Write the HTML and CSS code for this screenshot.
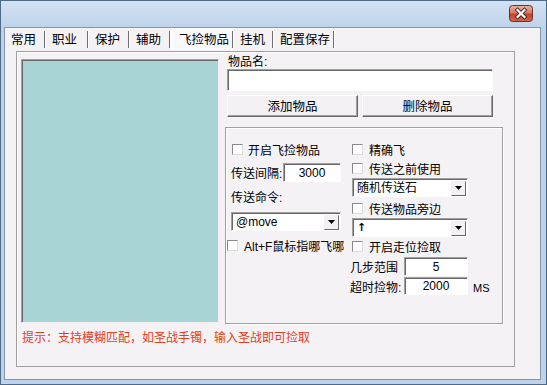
FILE: index.html
```html
<!DOCTYPE html>
<html>
	<head>
		<meta charset="UTF-8">
		<title>飞捡物品</title>
		<link rel="stylesheet" href="styles.css">
	</head>
	<body>
		<div class="window">
			<div class="titlebar">
				<div class="close">
					<svg width="24" height="17" viewBox="0 0 24 17">
						<defs>
							<linearGradient id="red" x1="0" y1="0" x2="0" y2="1">
								<stop offset="0" stop-color="#eab3a5"/>
								<stop offset="0.45" stop-color="#d77a63"/>
								<stop offset="0.55" stop-color="#c2432c"/>
								<stop offset="1" stop-color="#d8664a"/>
							</linearGradient>
						</defs>
						<rect x="0.5" y="0.5" width="23" height="16" rx="3" fill="url(#red)" stroke="#6f2f27"/>
						<path d="M8.5 5 L15.5 12 M15.5 5 L8.5 12" stroke="#4a2a26" stroke-width="4" stroke-linecap="square"/>
						<path d="M8.5 5 L15.5 12 M15.5 5 L8.5 12" stroke="#fff" stroke-width="2.2" stroke-linecap="square"/>
					</svg>
				</div>
			</div>
			<div class="client">
				<div class="tabs">
					<div class="tab t1">常用</div>
					<div class="tab t2">职业</div>
					<div class="tab t3">保护</div>
					<div class="tab t4">辅助</div>
					<div class="tab t5 on">飞捡物品</div>
					<div class="tab t6">挂机</div>
					<div class="tab t7">配置保存</div>
				</div>
				<div class="page">
					<div class="toprow">
						<div class="list"></div>
						<div class="side">
							<div class="label">物品名:</div>
							<div class="edit name"></div>
							<div class="btnrow">
								<div class="btn">添加物品</div>
								<div class="btn">删除物品</div>
							</div>
							<div class="group">
								<div class="col left">
									<div class="check c1"><span class="box"></span>开启飞捡物品</div>
									<div class="field f1">
										<span class="flabel">传送间隔:</span>
										<span class="edit num w58">3000</span>
									</div>
									<div class="label cmd">传送命令:</div>
									<div class="combo cb1">
										<span class="val">@move</span>
										<span class="arrow"><svg width="7" height="4"><polygon points="0,0 7,0 3.5,4" fill="#000"/></svg></span>
									</div>
									<div class="check c2"><span class="box"></span>Alt+F鼠标指哪飞哪</div>
								</div>
								<div class="col right">
									<div class="check r1"><span class="box"></span>精确飞</div>
									<div class="check r2"><span class="box"></span>传送之前使用</div>
									<div class="combo cb2">
										<span class="val">随机传送石</span>
										<span class="arrow"><svg width="7" height="4"><polygon points="0,0 7,0 3.5,4" fill="#000"/></svg></span>
									</div>
									<div class="check r3"><span class="box"></span>传送物品旁边</div>
									<div class="combo cb3">
										<span class="val up">↑</span>
										<span class="arrow"><svg width="7" height="4"><polygon points="0,0 7,0 3.5,4" fill="#000"/></svg></span>
									</div>
									<div class="check r4"><span class="box"></span>开启走位捡取</div>
									<div class="field f2">
										<span class="flabel w54">几步范围</span>
										<span class="edit num w64">5</span>
									</div>
									<div class="field f3">
										<span class="flabel w54">超时捡物:</span>
										<span class="edit num w64">2000</span>
										<span class="ms">MS</span>
									</div>
								</div>
							</div>
						</div>
					</div>
					<div class="hint">提示：支持模糊匹配，如圣战手镯，输入圣战即可捡取</div>
				</div>
			</div>
		</div>
	</body>
</html>
```
FILE: styles.css
```css
body{
	margin: 0;
	font-family: "Liberation Sans", "Noto Sans CJK SC", sans-serif;
	font-size: 12px;
	color: #000;
}
.window{
	width: 547px;
	height: 385px;
	box-sizing: border-box;
	border: 1px solid #4f6a88;
	background: linear-gradient(#d4e2f3 0px, #bed3ea 26px, #bed3ea 100%);
	padding: 0 5px 4px 3px;
	display: flex;
	flex-direction: column;
}
.titlebar{
	height: 26px;
	flex: none;
	display: flex;
	justify-content: flex-end;
	align-items: flex-start;
}
.close{
	margin: 4px 8px 0 0;
	width: 24px;
	height: 17px;
}
.close svg{
	display: block;
}
.client{
	flex: 1;
	border: 1px solid #8497ae;
	background: #f5f2f6;
}

/* tabs */
.tabs{
	display: flex;
	height: 22px;
}
.tab{
	box-sizing: border-box;
	display: flex;
	align-items: center;
	padding-left: 6px;
	padding-bottom: 2px;
	white-space: nowrap;
	font-size: 12.5px;
}
.tab::after{
	content: "";
	margin-left: auto;
	width: 1px;
	height: 17px;
	margin-top: 3px;
	background: #6e6e6e;
	border-right: 1px solid #fff;
}
.t1{ width: 41px; }
.t2{ width: 43px; }
.t3{ width: 41px; }
.t4{ width: 41px; }
.t5{ width: 63px; padding-left: 8px; }
.t6{ width: 40px; }
.t7{ width: 61px; }
.tab.on{
	background: #f9f8fa;
	box-shadow: inset 1px 1px #fff;
}

/* page */
.page{
	margin: 1px 0 0 11px;
	width: 499px;
	height: 316px;
	box-sizing: border-box;
	border: 1px solid #a0a0a0;
	box-shadow: inset 1px 1px #fff;
	padding: 4px 0 0 4px;
}
.toprow{
	display: flex;
	align-items: flex-start;
	gap: 6px;
}
.list{
	margin-top: 3px;
	width: 198px;
	height: 264px;
	box-sizing: border-box;
	background: #a8d4d6;
	border: 1px solid;
	border-color: #a0a0a0 #f0f0f0 #f0f0f0 #a0a0a0;
	box-shadow: inset 1px 1px #696969;
}
.side{
	width: 278px;
}
.label{
	height: 13px;
	line-height: 13px;
	padding-left: 3px;
}
.edit{
	display: block;
	box-sizing: border-box;
	background: #fff;
	border: 1px solid;
	border-color: #a0a0a0 #fff #fff #a0a0a0;
	box-shadow: inset 1px 1px #696969;
}
.name{
	margin-left: 2px;
	width: 266px;
	height: 22px;
}
.btnrow{
	display: flex;
	gap: 4px;
	margin: 4px 0 0 2px;
}
.btn{
	width: 131px;
	height: 22px;
	box-sizing: border-box;
	border: 1px solid;
	border-color: #fff #696969 #696969 #fff;
	box-shadow: inset -1px -1px #a0a0a0;
	background: #f3f1f4;
	display: flex;
	align-items: center;
	justify-content: center;
	padding-bottom: 1px;
	font-size: 12.5px;
}

/* group */
.group{
	margin-top: 10px;
	height: 197px;
	box-sizing: border-box;
	border: 1px solid #a0a0a0;
	box-shadow: inset 1px 1px #fff, 1px 1px #fff;
	display: flex;
}
.col{
	display: flex;
	flex-direction: column;
	align-items: flex-start;
}
.col.left{
	width: 124px;
}
.check{
	height: 12px;
	display: flex;
	align-items: center;
	white-space: nowrap;
}
.box{
	width: 11px;
	height: 11px;
	box-sizing: border-box;
	background: #fff;
	border: 1px solid;
	border-color: #8a8a8a #dcdcdc #dcdcdc #8a8a8a;
	margin-right: 5px;
	flex: none;
}
.c1{ margin-top: 15px; padding-left: 6px; }
.c2{ margin-top: 8px; padding-left: 1px; }
.c2 .box{ margin-right: 6px; }
.field{
	display: flex;
	align-items: center;
}
.flabel{
	box-sizing: border-box;
	white-space: nowrap;
}
.f1{ margin-top: 8px; padding-left: 5px; }
.f1 .flabel{ width: 52px; }
.num{
	height: 19px;
	text-align: center;
	line-height: 18px;
	font-size: 12px;
}
.w58{ width: 58px; }
.w64{ width: 64px; }
.w54{ width: 54px; }
.cmd{
	margin-top: 10px;
	padding-left: 5px;
}
.combo{
	height: 19px;
	box-sizing: border-box;
	background: #fff;
	border: 1px solid;
	border-color: #a0a0a0 #fff #fff #a0a0a0;
	box-shadow: inset 1px 1px #696969;
	display: flex;
	align-items: center;
	padding: 1px 1px 0 4px;
}
.combo .val{
	line-height: 16px;
}
.combo .up{
	font-family: "DejaVu Sans", sans-serif;
	font-weight: bold;
	font-size: 11px;
}
.arrow{
	margin-left: auto;
	width: 15px;
	height: 15px;
	box-sizing: border-box;
	background: #f3f1f4;
	border: 1px solid;
	border-color: #f0f0f0 #696969 #696969 #f0f0f0;
	display: flex;
	align-items: center;
	justify-content: center;
}
.arrow svg{
	display: block;
}
.cb1{ margin: 7px 0 0 5px; width: 110px; }
.cb2{ margin: 4px 0 0 2px; width: 116px; }
.cb3{ margin: 4px 0 0 2px; width: 116px; }
.r1{ margin-top: 15px; padding-left: 2px; }
.r2{ margin-top: 7px; padding-left: 2px; }
.r3{ margin-top: 5px; padding-left: 2px; }
.r4{ margin-top: 3px; padding-left: 2px; }
.right .box{ margin-right: 6px; }
.f2{ margin-top: 5px; }
.f3{ margin-top: 1px; }
.f3 .num{ height: 18px; line-height: 17px; }
.ms{
	margin-left: 5px;
	font-size: 11px;
	padding-top: 4px;
}
.hint{
	margin: 7px 0 0 1px;
	line-height: 14px;
	color: #e2401f;
}
```
